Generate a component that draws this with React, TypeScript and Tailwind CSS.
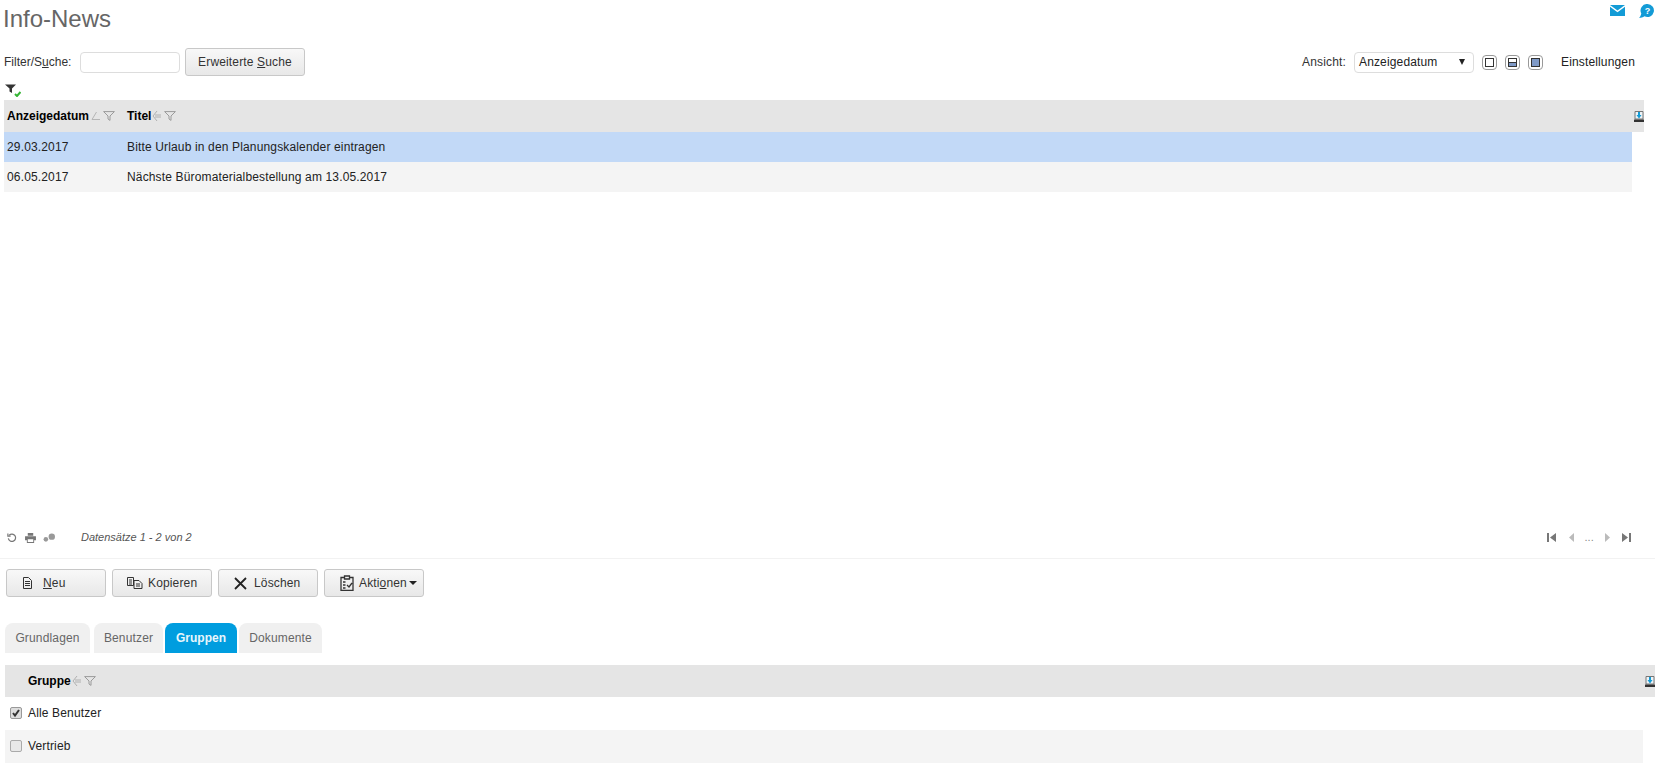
import { ReactNode } from 'react';

const SortIcon = () => (
  <svg width="9" height="12" viewBox="0 0 9 12" fill="none" stroke="#b0b0b0" strokeWidth="1" className="ml-px">
    <path d="M5 1 1 6l4 5M3 5h6M3 7h6" />
  </svg>
);

const SortAscIcon = () => (
  <svg width="9" height="10" viewBox="0 0 9 10" fill="none" stroke="#b5b5b5" strokeWidth="1" className="ml-[2px]">
    <path d="M5.500 1 1 8.500h8" />
  </svg>
);

const FilterIcon = () => (
  <svg width="12" height="10" viewBox="0 0 12 10" fill="none" stroke="#9a9a9a" strokeWidth="1" className="ml-[3px]">
    <path d="M.6.600h10.800L7 5v4.400L5 8V5z" />
  </svg>
);

const ExportIcon = () => (
  <svg width="10" height="11" viewBox="0 0 10 11">
    <path d="M1 .500h8V8H1z" fill="#eef3f6" stroke="#777" strokeWidth="1" />
    <path d="M0 8.500h10V11H0z" fill="#333" />
    <path d="M4 1h2v3h1.500L5 7.500 2.500 4H4z" fill="#139bd6" />
  </svg>
);

const Btn = ({ icon, children, w }: { icon: ReactNode; children: ReactNode; w: string }) => (
  <button className={`flex h-[28px] items-center rounded-[3px] border border-[#c8c8c8] bg-gradient-to-b from-[#f8f8f8] to-[#e8e8e8] text-[12px] text-[#333] ${w}`}>
    {icon}
    <span>{children}</span>
  </button>
);

const ViewBox = ({ children }: { children?: ReactNode }) => (
  <div className="flex h-[15px] w-[15px] items-center justify-center rounded-[4px] border border-[#999] bg-white">
    <div className="relative h-[9px] w-[9px] overflow-hidden border border-[#333]">{children}</div>
  </div>
);

const Tab = ({ label, active, w }: { label: string; active?: boolean; w: string }) => (
  <div
    className={`flex h-[30px] items-center justify-center rounded-t-[8px] text-[12px] ${w} ${
      active ? 'bg-[#009ddf] font-bold tracking-normal text-[#e8f6fc]' : 'bg-[#f0f0f0] text-[#666]'
    }`}
  >
    {label}
  </div>
);

export default function App() {
  return (
    <div className="h-[781px] w-[1655px] overflow-hidden bg-white font-['Liberation_Sans',Arial,sans-serif] text-[12px] tracking-[0.15px] text-[#222]">
      {/* Title */}
      <div className="flex h-[40px] items-start justify-between pl-[3px] pr-[1px]">
        <h1 className="mt-[5px] text-[24px] leading-[28px] tracking-normal text-[#666]">Info-News</h1>
        <div className="mt-[4px] flex items-start gap-[14px]">
          <svg className="mt-px" width="15" height="11" viewBox="0 0 15 11">
            <path d="M0 0h15L7.500 5.500z" fill="#139bd6" />
            <path d="M0 1.800l7.500 5.500L15 1.800V11H0z" fill="#139bd6" />
          </svg>
          <svg width="15" height="14" viewBox="0 0 15 14">
            <path d="M8.500 0a6.500 6.500 0 1 1-3 12.300C4 13.500 2 14 0 14c1-1 1.800-2.500 2.300-4.500A6.500 6.500 0 0 1 8.500 0z" fill="#139bd6" />
            <text x="8.500" y="10" textAnchor="middle" fontSize="9" fontWeight="bold" fill="#fff">?</text>
          </svg>
        </div>
      </div>

      {/* Filter row */}
      <div className="flex h-[44px] items-center justify-between pl-[4px] pr-[20px]">
        <div className="flex items-center">
          <span className="w-[76px] tracking-normal text-[#333]">
            Filter/S<u>u</u>che:
          </span>
          <input className="h-[21px] w-[100px] rounded-[4px] border border-[#ddd] bg-white" />
          <button className="ml-[5px] h-[28px] w-[120px] rounded-[3px] border border-[#c8c8c8] bg-gradient-to-b from-[#f8f8f8] to-[#e8e8e8] text-[12px] text-[#333]">
            Erweiterte <u>S</u>uche
          </button>
        </div>
        <div className="flex items-center">
          <span className="mr-[8px] text-[#333]">Ansicht:</span>
          <div className="flex h-[21px] w-[120px] items-center justify-between rounded-[4px] border border-[#ddd] bg-white pl-[4px] pr-[8px]">
            <span>Anzeigedatum</span>
            <span className="h-0 w-0 border-x-[3px] border-t-[6px] border-x-transparent border-t-[#222]" />
          </div>
          <div className="ml-[8px] flex items-center gap-[8px]">
            <ViewBox />
            <ViewBox>
              <div className="absolute inset-x-0 bottom-0 h-[4px] border-t border-[#333] bg-[#7f9ac7]" />
            </ViewBox>
            <ViewBox>
              <div className="h-full w-full bg-[#7f9ac7]" />
            </ViewBox>
          </div>
          <span className="ml-[18px]">Einstellungen</span>
        </div>
      </div>

      {/* Filter state icon */}
      <div className="flex h-[16px] items-start pl-[5px]">
        <svg width="16" height="13" viewBox="0 0 16 13">
          <path d="M0 .500h11L7 4.500V9L4.500 7.500v-3z" fill="#333" />
          <path d="M10 10l2 2 3.500-4" fill="none" stroke="#35b535" strokeWidth="2" />
        </svg>
      </div>

      {/* Main table */}
      <div className="ml-[4px] mr-[11px] flex h-[32px] items-center bg-[#e5e5e5]">
        <div className="flex w-[123px] items-center pl-[3px] font-bold tracking-normal text-black">
          Anzeigedatum
          <SortAscIcon />
          <FilterIcon />
        </div>
        <div className="flex flex-1 items-center font-bold tracking-normal text-black">
          Titel
          <SortIcon />
          <FilterIcon />
        </div>
        <ExportIcon />
      </div>
      <div className="ml-[4px] mr-[23px] flex h-[30px] items-center bg-[#c2d9f7]">
        <div className="w-[123px] pl-[3px]">29.03.2017</div>
        <div className="flex-1">Bitte Urlaub in den Planungskalender eintragen</div>
      </div>
      <div className="ml-[4px] mr-[23px] flex h-[30px] items-center bg-[#f4f4f4]">
        <div className="w-[123px] pl-[3px]">06.05.2017</div>
        <div className="flex-1">Nächste Büromaterialbestellung am 13.05.2017</div>
      </div>

      {/* Pager */}
      <div className="mt-[331px] flex h-[36px] items-center justify-between border-b border-[#f2f2f2] pb-[6px] pl-[6px] pr-[24px]">
        <div className="flex items-center">
          <svg width="12" height="11" viewBox="0 0 12 12" fill="none" stroke="#777" strokeWidth="1.300">
            <path d="M3 3.500A4 4 0 1 1 2 7M1.500 1.500v3h3" />
          </svg>
          <svg className="ml-[7px]" width="11" height="10" viewBox="0 0 12 11" fill="#777">
            <path d="M3 0h6v3H3zM0 3.500h12V8h-2v3H2V8H0zM3 7v3h6V7z" />
          </svg>
          <svg className="ml-[7px]" width="13" height="10" viewBox="0 0 14 11" fill="#999">
            <circle cx="3" cy="7" r="2.500" />
            <circle cx="9.500" cy="4" r="3.500" />
          </svg>
          <span className="ml-[25px] text-[11px] italic tracking-normal text-[#555]">Datensätze 1 - 2 von 2</span>
        </div>
        <div className="flex items-center text-[#888]">
          <svg width="10" height="9" viewBox="0 0 10 9" fill="#777">
            <path d="M0 0h2v9H0zM9 0v9L3 4.500z" />
          </svg>
          <svg className="ml-[12px]" width="6" height="9" viewBox="0 0 6 9" fill="#bbb">
            <path d="M5 0v9L0 4.500z" />
          </svg>
          <span className="ml-[9px] text-[11px]">...</span>
          <svg className="ml-[10px]" width="6" height="9" viewBox="0 0 6 9" fill="#bbb">
            <path d="M1 0v9l5-4.500z" />
          </svg>
          <svg className="ml-[11px]" width="10" height="9" viewBox="0 0 10 9" fill="#777">
            <path d="M8 0h2v9H8zM1 0v9l6-4.500z" />
          </svg>
        </div>
      </div>

      {/* Action buttons */}
      <div className="mt-[10px] flex gap-[6px] pl-[6px]">
        <Btn
          w="w-[100px] gap-[11px] pl-[16px]"
          icon={
            <svg width="9" height="12" viewBox="0 0 9 12" fill="none" stroke="#333">
              <path d="M.5.500h5l3 3v8h-8zM2 4.500h5M2 6.500h5M2 8.500h5" />
            </svg>
          }
        >
          <u>N</u>eu
        </Btn>
        <Btn
          w="w-[100px] gap-[5px] pl-[14px]"
          icon={
            <svg width="16" height="12" viewBox="0 0 16 12" fill="none" stroke="#333">
              <path d="M.5.500h6v8h-6zM7 3.500h5l3 3v5H7zM2 3h3M2 5h3M2 7h3M9 7h4M9 9h4" />
            </svg>
          }
        >
          Kopieren
        </Btn>
        <Btn
          w="w-[100px] gap-[7px] pl-[15px]"
          icon={
            <svg width="13" height="13" viewBox="0 0 13 13" fill="none" stroke="#222" strokeWidth="1.800">
              <path d="M1 1l11 11M12 1L1 12" />
            </svg>
          }
        >
          Löschen
        </Btn>
        <button className="flex h-[28px] w-[100px] items-center rounded-[3px] border border-[#c8c8c8] bg-gradient-to-b from-[#f8f8f8] to-[#e8e8e8] pl-[15px] text-[12px] text-[#333]">
          <svg width="14" height="16" viewBox="0 0 14 16" fill="none" stroke="#333" strokeWidth="1.300">
            <path d="M4 2.500H1v13h12v-13h-3M4.500 1h5v3h-5zM3 7h2.500M3 10h2.500M3 13h2.500M7 10l2 2 3-4" />
          </svg>
          <span className="ml-[5px]">
            Akti<u>o</u>nen
          </span>
          <span className="ml-[2px] h-0 w-0 border-x-[4px] border-t-[4px] border-x-transparent border-t-[#222]" />
        </button>
      </div>

      {/* Tabs */}
      <div className="mt-[26px] flex pl-[5px]">
        <Tab label="Grundlagen" w="w-[85px]" />
        <div className="w-[4px]" />
        <Tab label="Benutzer" w="w-[69px]" />
        <div className="w-[2px]" />
        <Tab label="Gruppen" w="w-[72px]" active />
        <div className="w-[2px]" />
        <Tab label="Dokumente" w="w-[83px]" />
      </div>

      {/* Groups table */}
      <div className="ml-[5px] mt-[12px] flex h-[32px] items-center bg-[#e5e5e5] pl-[23px]">
        <div className="flex flex-1 items-center font-bold tracking-normal text-black">
          Gruppe
          <SortIcon />
          <FilterIcon />
        </div>
        <ExportIcon />
      </div>
      <div className="ml-[5px] mr-[12px] flex h-[33px] items-center bg-white pb-px">
        <span className="ml-[5px] flex h-[12px] w-[12px] items-center justify-center rounded-[2px] border border-[#999] bg-[#ddd]">
          <svg width="10" height="10" viewBox="0 0 10 10" fill="none" stroke="#333" strokeWidth="2">
            <path d="M2 5l2 2.500L8 2" />
          </svg>
        </span>
        <span className="ml-[6px]">Alle Benutzer</span>
      </div>
      <div className="ml-[5px] mr-[12px] flex h-[33px] items-center bg-[#f4f4f4] pb-px">
        <span className="ml-[5px] h-[12px] w-[12px] rounded-[2px] border border-[#aaa] bg-[#e8e8e8]" />
        <span className="ml-[6px]">Vertrieb</span>
      </div>
    </div>
  );
}
